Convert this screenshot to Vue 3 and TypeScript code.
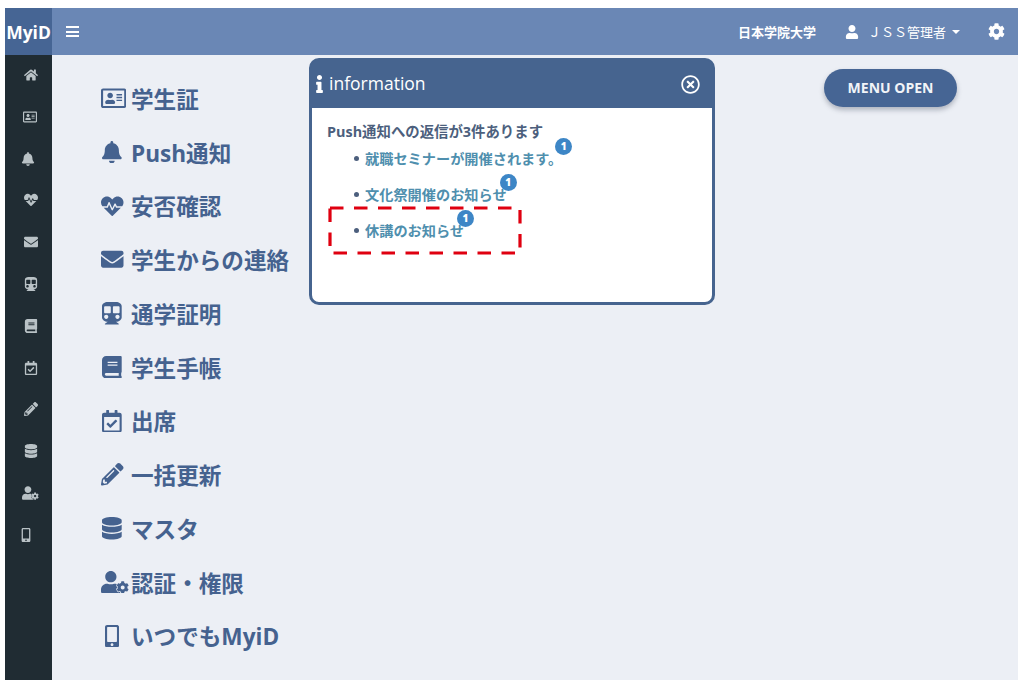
<script setup lang="ts">
interface Icon {
  box: string;
  d: string;
  gear?: boolean;
}

const cog =
  'M487.4 315.7l-42.6-24.6c4.3-23.2 4.3-47 0-70.2l42.6-24.6c4.9-2.8 7.1-8.6 5.5-14-11.1-35.6-30-67.8-54.7-94.6-3.8-4.1-10-5.1-14.8-2.3L380.8 110c-17.9-15.4-38.5-27.3-60.8-35.1V25.8c0-5.6-3.9-10.5-9.4-11.7-36.7-8.2-74.3-7.8-109.2 0-5.5 1.2-9.4 6.1-9.4 11.7V75c-22.2 7.9-42.8 19.8-60.8 35.1L88.7 85.5c-4.9-2.8-11-1.9-14.8 2.3-24.7 26.7-43.6 58.9-54.7 94.6-1.7 5.4.6 11.2 5.5 14L67.3 221c-4.3 23.2-4.3 47 0 70.2l-42.6 24.6c-4.9 2.8-7.1 8.6-5.5 14 11.1 35.6 30 67.8 54.7 94.6 3.8 4.1 10 5.1 14.8 2.3l42.6-24.6c17.9 15.4 38.5 27.3 60.8 35.1v49.2c0 5.6 3.9 10.5 9.4 11.7 36.7 8.2 74.3 7.8 109.2 0 5.5-1.2 9.4-6.1 9.4-11.7v-49.2c22.2-7.9 42.8-19.8 60.8-35.1l42.6 24.6c4.9 2.8 11 1.9 14.8-2.3 24.7-26.7 43.6-58.9 54.7-94.6 1.5-5.5-.7-11.3-5.6-14.1zM256 336c-44.1 0-80-35.9-80-80s35.9-80 80-80 80 35.9 80 80-35.9 80-80 80z';
const userPath =
  'M224 256c70.7 0 128-57.3 128-128S294.7 0 224 0 96 57.3 96 128s57.3 128 128 128zm89.6 32h-16.7c-22.2 10.2-46.9 16-72.9 16s-50.6-5.8-72.9-16h-16.7C60.2 288 0 348.2 0 422.4V464c0 26.5 21.5 48 48 48h352c26.5 0 48-21.5 48-48v-41.6c0-74.2-60.2-134.4-134.4-134.4z';
const closePath =
  'M256 8C119 8 8 119 8 256s111 248 248 248 248-111 248-248S393 8 256 8zm0 448c-110.5 0-200-89.5-200-200S145.5 56 256 56s200 89.5 200 200-89.5 200-200 200zm101.8-262.2L295.6 256l62.2 62.2c4.7 4.7 4.7 12.3 0 17l-22.6 22.6c-4.7 4.7-12.3 4.7-17 0L256 295.6l-62.2 62.2c-4.7 4.7-12.3 4.7-17 0l-22.6-22.6c-4.7-4.7-4.7-12.3 0-17l62.2-62.2-62.2-62.2c-4.7-4.7-4.7-12.3 0-17l22.6-22.6c4.7-4.7 12.3-4.7 17 0l62.2 62.2 62.2-62.2c4.7-4.7 12.3-4.7 17 0l22.6 22.6c4.7 4.7 4.7 12.3 0 17z';
const infoPath =
  'M20 424.229h20V279.771H20c-11.046 0-20-8.954-20-20V212c0-11.046 8.954-20 20-20h112c11.046 0 20 8.954 20 20v212.229h20c11.046 0 20 8.954 20 20V492c0 11.046-8.954 20-20 20H20c-11.046 0-20-8.954-20-20v-47.771c0-11.046 8.954-20 20-20zM96 0C56.235 0 24 32.235 24 72s32.235 72 72 72 72-32.235 72-72S135.764 0 96 0z';

const home: Icon = {
  box: '0 0 576 512',
  d: 'M280.37 148.26L96 300.11V464a16 16 0 0 0 16 16l112.06-.29a16 16 0 0 0 15.92-16V368a16 16 0 0 1 16-16h64a16 16 0 0 1 16 16v95.64a16 16 0 0 0 16 16.05L464 480a16 16 0 0 0 16-16V300L295.67 148.26a12.19 12.19 0 0 0-15.3 0zM571.6 251.47L488 182.56V44.05a12 12 0 0 0-12-12h-56a12 12 0 0 0-12 12v72.61L318.47 43a48 48 0 0 0-61 0L4.34 251.47a12 12 0 0 0-1.6 16.9l25.5 31A12 12 0 0 0 45.15 301l235.22-193.74a12.19 12.19 0 0 1 15.3 0L530.9 301a12 12 0 0 0 16.9-1.6l25.5-31a12 12 0 0 0-1.7-16.93z',
};

const menu: { label: string; icon: Icon }[] = [
  {
    label: '学生証',
    icon: {
      box: '0 0 576 512',
      d: 'M528 32H48C21.5 32 0 53.5 0 80v352c0 26.5 21.5 48 48 48h480c26.5 0 48-21.5 48-48V80c0-26.5-21.5-48-48-48zm0 400H48V80h480v352zM208 256c35.3 0 64-28.7 64-64s-28.7-64-64-64-64 28.7-64 64 28.7 64 64 64zm-89.6 128h179.2c12.4 0 22.4-8.6 22.4-19.2v-19.2c0-31.8-30.1-57.6-67.2-57.6-10.8 0-18.7 8-44.8 8-26.9 0-33.4-8-44.8-8-37.1 0-67.2 25.8-67.2 57.6v19.2c0 10.6 10 19.2 22.4 19.2zM360 320h112c4.4 0 8-3.6 8-8v-16c0-4.4-3.6-8-8-8H360c-4.4 0-8 3.6-8 8v16c0 4.4 3.6 8 8 8zm0-64h112c4.4 0 8-3.6 8-8v-16c0-4.4-3.6-8-8-8H360c-4.4 0-8 3.6-8 8v16c0 4.4 3.6 8 8 8zm0-64h112c4.4 0 8-3.6 8-8v-16c0-4.4-3.6-8-8-8H360c-4.4 0-8 3.6-8 8v16c0 4.4 3.6 8 8 8z',
    },
  },
  {
    label: 'Push通知',
    icon: {
      box: '0 0 448 512',
      d: 'M224 512c35.32 0 63.97-28.65 63.97-64H160.03c0 35.35 28.65 64 63.97 64zm215.39-149.71c-19.32-20.76-55.47-51.99-55.47-154.29 0-77.7-54.48-139.9-127.94-155.16V32c0-17.67-14.32-32-31.98-32s-31.98 14.33-31.98 32v20.84C118.56 68.1 64.08 130.3 64.08 208c0 102.3-36.15 133.53-55.47 154.29-6 6.45-8.66 14.16-8.61 21.71.11 16.4 12.98 32 32.1 32h383.8c19.12 0 32-15.6 32.1-32 .05-7.55-2.61-15.27-8.61-21.71z',
    },
  },
  {
    label: '安否確認',
    icon: {
      box: '0 0 512 512',
      d: 'M320.2 243.8l-49.7 99.4c-6 12.1-23.4 11.7-28.9-.6l-56.9-126.3-30 71.7H60.6l182.5 186.5c7.1 7.3 18.6 7.3 25.7 0L451.4 288H342.3l-22.1-44.2zM473.7 73.9l-2.4-2.5c-51.5-52.6-135.8-52.6-187.4 0L256 100l-27.9-28.5c-51.5-52.7-135.9-52.7-187.4 0l-2.4 2.4C-10.4 123.7-12.5 203 31 256h102.4l35.9-86.2c5.4-12.9 23.6-13.2 29.4-.4l58.2 129.3 49-97.9c5.9-11.8 22.7-11.8 28.6 0l27.6 55.2H481c43.5-53 41.4-132.3-7.3-182.1z',
    },
  },
  {
    label: '学生からの連絡',
    icon: {
      box: '0 0 512 512',
      d: 'M502.3 190.8c3.9-3.1 9.7-.2 9.7 4.7V400c0 26.5-21.5 48-48 48H48c-26.5 0-48-21.5-48-48V195.6c0-5 5.7-7.8 9.7-4.7 22.4 17.4 52.1 39.5 154.1 113.6 21.1 15.4 56.7 47.8 92.2 47.6 35.7.3 72-32.8 92.3-47.6 102-74.1 131.6-96.3 154-113.7zM256 320c23.2.4 56.6-29.2 73.4-41.4 132.7-96.3 142.8-104.7 173.4-128.7 5.8-4.5 9.2-11.5 9.2-18.9v-19c0-26.5-21.5-48-48-48H48C21.5 64 0 85.5 0 112v19c0 7.4 3.4 14.3 9.2 18.9 30.6 23.9 40.7 32.4 173.4 128.7 16.8 12.2 50.2 41.8 73.4 41.4z',
    },
  },
  {
    label: '通学証明',
    icon: {
      box: '0 0 448 512',
      d: 'M448 96v256c0 51.815-61.624 96-130.022 96l62.98 49.721C386.905 502.417 383.562 512 376 512H72c-7.578 0-10.892-9.594-4.957-14.279L130.022 448C61.82 448 0 403.954 0 352V96C0 42.981 64 0 128 0h192c65 0 128 42.981 128 96zM200 232V120c0-13.255-10.745-24-24-24H72c-13.255 0-24 10.745-24 24v112c0 13.255 10.745 24 24 24h104c13.255 0 24-10.745 24-24zm200 0V120c0-13.255-10.745-24-24-24H272c-13.255 0-24 10.745-24 24v112c0 13.255 10.745 24 24 24h104c13.255 0 24-10.745 24-24zm-48 56c-26.51 0-48 21.49-48 48s21.49 48 48 48 48-21.49 48-48-21.49-48-48-48zm-256 0c-26.51 0-48 21.49-48 48s21.49 48 48 48 48-21.49 48-48-21.49-48-48-48z',
    },
  },
  {
    label: '学生手帳',
    icon: {
      box: '0 0 448 512',
      d: 'M448 360V24c0-13.3-10.7-24-24-24H96C43 0 0 43 0 96v320c0 53 43 96 96 96h328c13.3 0 24-10.7 24-24v-16c0-7.5-3.5-14.3-8.9-18.7-4.2-15.4-4.2-59.3 0-74.7 5.4-4.3 8.9-11.1 8.9-18.6zM128 134c0-3.3 2.7-6 6-6h212c3.3 0 6 2.7 6 6v20c0 3.3-2.7 6-6 6H134c-3.3 0-6-2.7-6-6v-20zm0 64c0-3.3 2.7-6 6-6h212c3.3 0 6 2.7 6 6v20c0 3.3-2.7 6-6 6H134c-3.3 0-6-2.7-6-6v-20zm253.4 250H96c-17.7 0-32-14.3-32-32 0-17.6 14.4-32 32-32h285.4c-1.9 17.1-1.9 46.9 0 64z',
    },
  },
  {
    label: '出席',
    icon: {
      box: '0 0 448 512',
      d: 'M400 64h-48V12c0-6.627-5.373-12-12-12h-40c-6.627 0-12 5.373-12 12v52H160V12c0-6.627-5.373-12-12-12h-40c-6.627 0-12 5.373-12 12v52H48C21.49 64 0 85.49 0 112v352c0 26.51 21.49 48 48 48h352c26.51 0 48-21.49 48-48V112c0-26.51-21.49-48-48-48zm-6 400H54a6 6 0 0 1-6-6V160h352v298a6 6 0 0 1-6 6zm-52.849-200.65L198.842 404.519c-4.705 4.667-12.303 4.637-16.971-.068l-75.091-75.699c-4.667-4.705-4.637-12.303.068-16.971l22.719-22.536c4.705-4.667 12.303-4.637 16.97.069l44.104 44.461 111.072-110.181c4.705-4.667 12.303-4.637 16.971.068l22.536 22.718c4.667 4.705 4.636 12.303-.069 16.97z',
    },
  },
  {
    label: '一括更新',
    icon: {
      box: '0 0 512 512',
      d: 'M497.9 142.1l-46.1 46.1c-4.7 4.7-12.3 4.7-17 0l-111-111c-4.7-4.7-4.7-12.3 0-17l46.1-46.1c18.7-18.7 49.1-18.7 67.9 0l60.1 60.1c18.8 18.7 18.8 49.1 0 67.9zM284.2 99.8L21.6 362.4.4 483.9c-2.9 16.4 11.4 30.6 27.8 27.8l121.5-21.3 262.6-262.6c4.7-4.7 4.7-12.3 0-17l-111-111c-4.8-4.7-12.4-4.7-17.1 0zM124.1 339.9c-5.5-5.5-5.5-14.3 0-19.8l154-154c5.5-5.5 14.3-5.5 19.8 0s5.5 14.3 0 19.8l-154 154c-5.5 5.5-14.3 5.5-19.8 0zM88 424h48v36.3l-64.5 11.3-31.1-31.1L51.7 376H88v48z',
    },
  },
  {
    label: 'マスタ',
    icon: {
      box: '0 0 448 512',
      d: 'M448 73.143v45.714C448 159.143 347.667 192 224 192S0 159.143 0 118.857V73.143C0 32.857 100.333 0 224 0s224 32.857 224 73.143zM448 176v102.857C448 319.143 347.667 352 224 352S0 319.143 0 278.857V176c48.125 33.143 136.208 48.572 224 48.572S399.874 209.143 448 176zm0 160v102.857C448 479.143 347.667 512 224 512S0 479.143 0 438.857V336c48.125 33.143 136.208 48.572 224 48.572S399.874 369.143 448 336z',
    },
  },
  { label: '認証・権限', icon: { box: '0 0 640 512', d: userPath, gear: true } },
  {
    label: 'いつでもMyiD',
    icon: {
      box: '0 0 320 512',
      d: 'M272 0H48C21.5 0 0 21.5 0 48v416c0 26.5 21.5 48 48 48h224c26.5 0 48-21.5 48-48V48c0-26.5-21.5-48-48-48zM160 480c-17.7 0-32-14.3-32-32s14.3-32 32-32 32 14.3 32 32-14.3 32-32 32zm112-108c0 6.6-5.4 12-12 12H60c-6.6 0-12-5.4-12-12V60c0-6.6 5.4-12 12-12h200c6.6 0 12 5.4 12 12v312z',
    },
  },
];

const sideIcons: Icon[] = [home, ...menu.map((m) => m.icon)];

const notices = ['就職セミナーが開催されます。', '文化祭開催のお知らせ', '休講のお知らせ'];
</script>

<template>
  <div class="shell">
    <header class="topbar">
      <div class="brand">MyiD</div>
      <div class="burger"><span></span><span></span><span></span></div>
      <div class="school">日本学院大学</div>
      <div class="user">
        <svg viewBox="0 0 448 512"><path :d="userPath" /></svg>
        <span>ＪＳＳ管理者</span>
        <i class="caret"></i>
      </div>
      <svg class="settings" viewBox="0 0 512 512"><path :d="cog" /></svg>
    </header>

    <div class="body">
      <nav class="side">
        <svg v-for="(icon, i) in sideIcons" :key="i" :viewBox="icon.box">
          <path :d="icon.d" />
          <path v-if="icon.gear" class="gear" :d="cog" transform="translate(350 230) scale(.56)" />
        </svg>
      </nav>

      <main class="content">
        <ul class="menu">
          <li v-for="item in menu" :key="item.label">
            <span class="menu-icon">
              <svg :viewBox="item.icon.box">
                <path :d="item.icon.d" />
                <path v-if="item.icon.gear" class="gear" :d="cog" transform="translate(350 230) scale(.56)" />
              </svg>
            </span>
            <span>{{ item.label }}</span>
          </li>
        </ul>
        <button class="open-btn">MENU OPEN</button>

        <section class="popup">
          <div class="popup-head">
            <svg class="info" viewBox="0 0 192 512"><path :d="infoPath" /></svg>
            <span class="popup-title">information</span>
            <svg class="close" viewBox="0 0 512 512"><path :d="closePath" /></svg>
          </div>
          <div class="popup-body">
            <p>Push通知への返信が3件あります</p>
            <ul>
              <li v-for="n in notices" :key="n">
                <span class="notice">{{ n }}<b class="badge">1</b></span>
              </li>
            </ul>
          </div>
        </section>

        <svg class="callout" width="196" height="49">
          <rect x="4" y="2" width="190" height="45" />
        </svg>
      </main>
    </div>
  </div>
</template>

<style scoped>
.shell {
  box-sizing: border-box;
  width: 1024px;
  height: 685px;
  padding: 8px 6px 5px 5px;
  display: flex;
  flex-direction: column;
  font-family: "Open Sans", "Noto Sans CJK JP", sans-serif;
}

.topbar {
  height: 47px;
  flex: none;
  display: flex;
  align-items: center;
  background: #6a87b5;
  color: #fff;
}

.brand {
  width: 47px;
  height: 100%;
  display: flex;
  align-items: center;
  justify-content: center;
  background: #466594;
  font-size: 17.5px;
  font-weight: 700;
}

.burger {
  margin-left: 14px;
  width: 13px;
  display: flex;
  flex-direction: column;
  gap: 2.5px;
}

.burger span {
  height: 2px;
  background: #fff;
}

.school {
  margin-left: auto;
  font-size: 13px;
  font-weight: 700;
}

.user {
  margin-left: 29px;
  display: flex;
  align-items: center;
  font-size: 13px;
}

.user svg {
  width: 14px;
  height: 14px;
  margin-right: 9px;
  fill: #fff;
}

.caret {
  margin-left: 6px;
  border: 4px solid transparent;
  border-top-color: #fff;
  border-bottom: 0;
}

.settings {
  width: 17px;
  height: 17px;
  margin: 0 13px 0 28px;
  fill: #fff;
}

.body {
  flex: 1;
  display: flex;
  min-height: 0;
}

.side {
  --gap: #202c33;
  width: 47px;
  flex: none;
  box-sizing: border-box;
  padding: 13px 0 0 5px;
  background: #202c33;
  display: flex;
  flex-direction: column;
  align-items: center;
  gap: 27.8px;
}

.side svg {
  width: 14px;
  height: 14px;
  flex: none;
  fill: #b9c2c6;
}

.side svg:nth-child(3) {
  margin-left: -6px;
}

.side svg:nth-child(2),
.side svg:nth-child(11) {
  margin-left: -2px;
}

.side svg:nth-child(11) {
  width: 17px;
}

.side svg:nth-child(12) {
  margin-left: -10px;
}

.gear {
  stroke: var(--gap);
  stroke-width: 50;
  paint-order: stroke;
}

.content {
  --gap: #eceff5;
  position: relative;
  flex: 1;
  display: flex;
  justify-content: space-between;
  align-items: flex-start;
  background: #eceff5;
}

.menu {
  list-style: none;
  margin: 0;
  padding: 16.5px 0 0 49px;
  color: #45628f;
  font-size: 22.6px;
  font-weight: 700;
}

.menu li {
  height: 53.75px;
  display: flex;
  align-items: center;
  white-space: nowrap;
}

.menu-icon {
  width: 22px;
  margin-right: 8px;
  display: flex;
}

.menu-icon svg {
  height: 22.5px;
  flex: none;
  margin: 0 auto;
  fill: #45628f;
}

.open-btn {
  width: 133px;
  height: 38px;
  margin: 14px 61px 0 0;
  padding: 0 0 2px;
  border: 0;
  border-radius: 19px;
  background: #466594;
  color: #f2f4f8;
  font: 700 14px "Open Sans", sans-serif;
  box-shadow: 0 3px 5px rgba(60, 70, 90, 0.35);
}

.popup {
  position: absolute;
  left: 257px;
  top: 3px;
  width: 406px;
  height: 247px;
  box-sizing: border-box;
  border: 3px solid #46648f;
  border-radius: 10px;
  background: #fff;
}

.popup-head {
  height: 48px;
  margin: -1px -1px 0;
  padding: 0 13px 0 5px;
  display: flex;
  align-items: center;
  background: #46648f;
  border-radius: 8px 8px 0 0;
  color: #fff;
  font-size: 17.5px;
}

.popup-title {
  margin-bottom: 2px;
}

.info {
  width: 7px;
  height: 18px;
  margin-right: 6px;
  fill: #fff;
}

.close {
  width: 19px;
  height: 19px;
  margin-left: auto;
  fill: #fff;
}

.popup-body {
  padding: 15px 15px 0;
  color: #4c5f7d;
  font-size: 14.2px;
  font-weight: 700;
}

.popup-body p {
  margin: 0;
  font-size: 14.4px;
  line-height: 18px;
}

.popup-body ul {
  list-style: none;
  margin: -1px 0 0;
  padding: 0 0 0 27px;
}

.popup-body li {
  height: 36px;
  display: flex;
  align-items: center;
}

.popup-body li::before {
  content: "";
  width: 5px;
  height: 5px;
  margin-right: 6px;
  border-radius: 50%;
  background: #4c5f7d;
}

.notice {
  position: relative;
  color: #4f8fae;
  white-space: nowrap;
}

.badge {
  position: absolute;
  right: -10px;
  top: -10px;
  width: 17px;
  height: 17px;
  border-radius: 50%;
  background: #3d86c6;
  color: #fff;
  font-size: 10px;
  line-height: 17px;
  text-align: center;
}

.callout {
  position: absolute;
  left: 274px;
  top: 151px;
  fill: none;
  stroke: #df0010;
  stroke-width: 3.2;
  stroke-dasharray: 13.5 10.5;
}
</style>

<style>
body {
  background: #fff;
}
</style>
